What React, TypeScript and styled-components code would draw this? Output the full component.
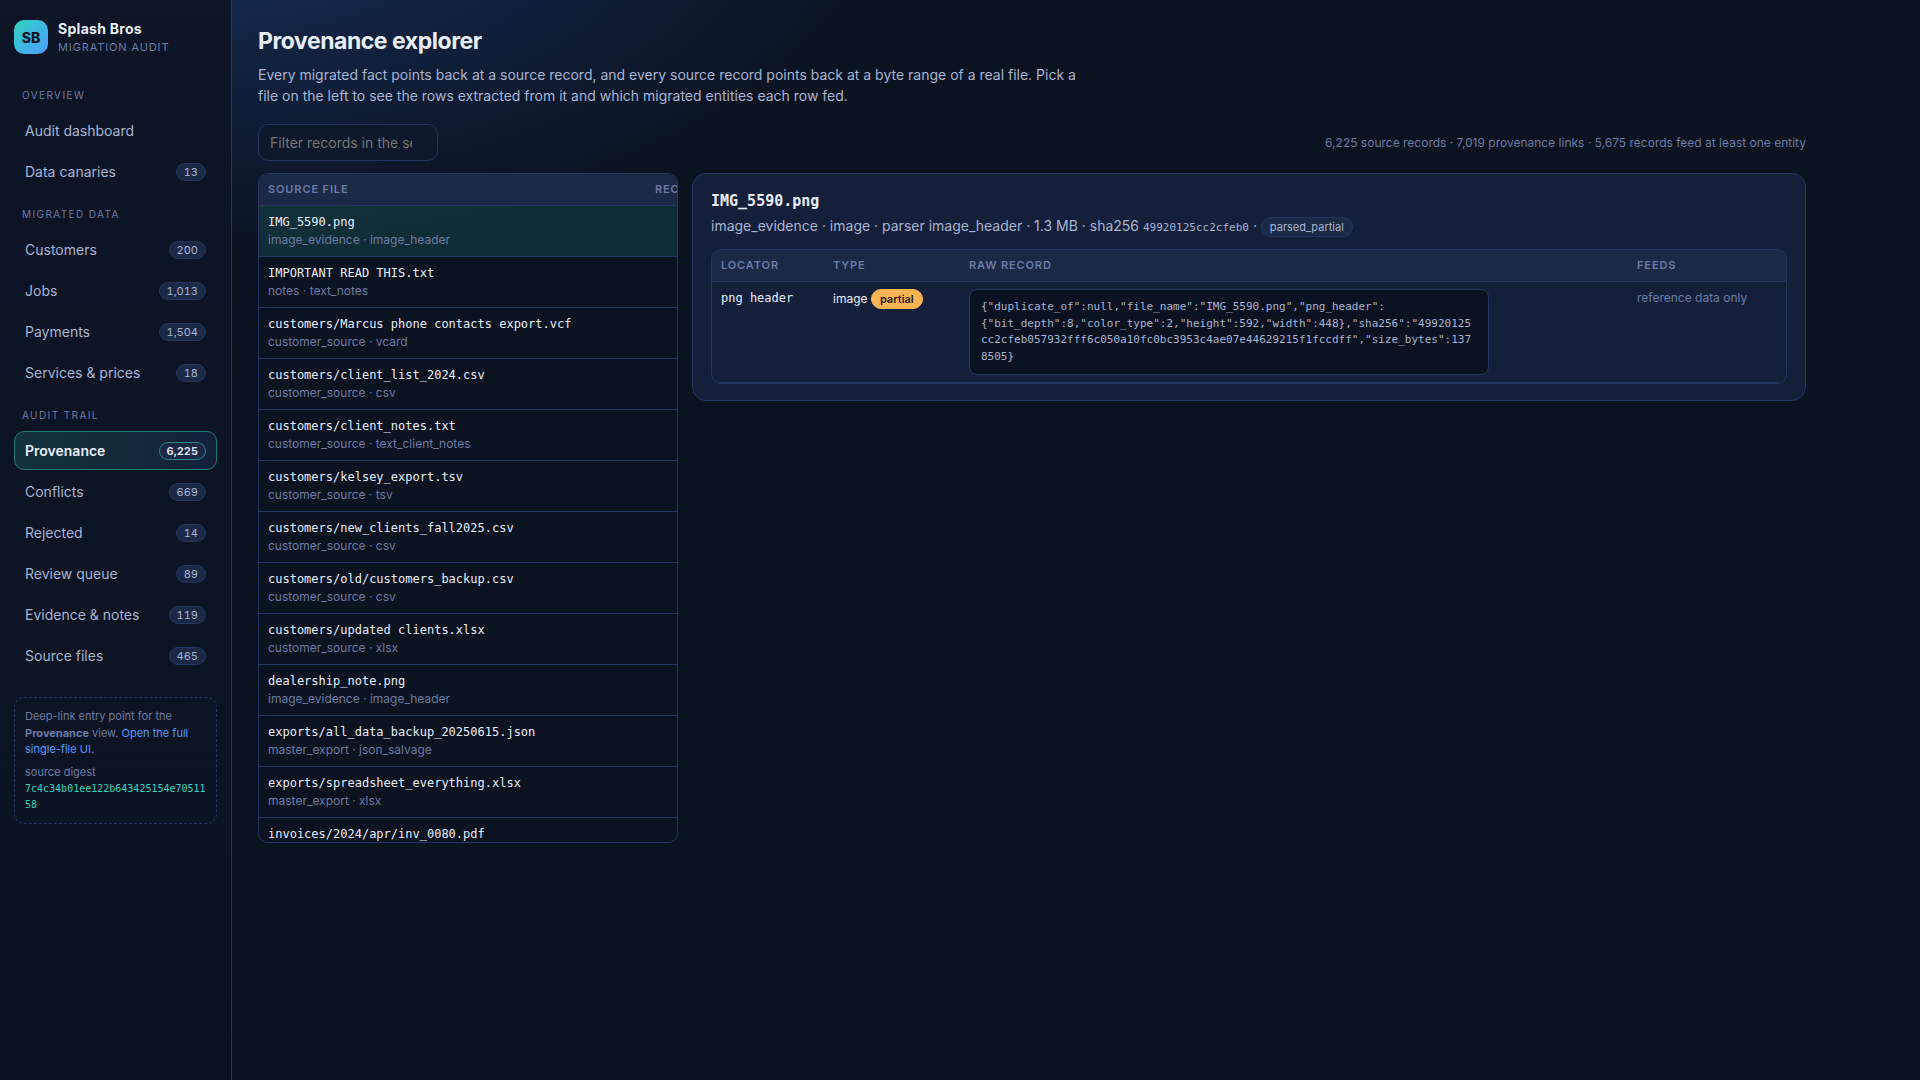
import React from "react";
import styled, { createGlobalStyle, css } from "styled-components";

const c = {
  bg: "#0b1220",
  panel: "#141f3a",
  raised: "#1b2947",
  line: "#233560",
  text: "#e8eefc",
  soft: "#a7b4d3",
  muted: "#6b7ba5",
  teal: "#2dd4bf",
  blue: "#4f9cff",
  amber: "#ffb454",
};

const sans = `Inter, "Noto Sans", sans-serif`;
const mono = `"DejaVu Sans Mono", "Liberation Mono", monospace`;

const GlobalStyle = createGlobalStyle`
  *, *::before, *::after { box-sizing: border-box; }
  body {
    margin: 0;
    background: radial-gradient(1200px 600px at 10% -10%, #16305a 0%, transparent 60%) no-repeat ${c.bg};
    color: ${c.text};
    font: 14px/1.5 ${sans};
    min-height: 100vh;
  }
`;

const Shell = styled.div`
  display: grid;
  grid-template-columns: 232px minmax(0, 1fr);
  min-height: 100vh;
`;

const Sidebar = styled.aside`
  padding: 20px 14px;
  border-right: 1px solid ${c.line};
  background: linear-gradient(180deg, #0d1426, #0b1220);
`;

const Brand = styled.div`
  display: flex;
  align-items: flex-start;
  gap: 10px;
  margin-bottom: 16px;
`;

const Logo = styled.div`
  display: grid;
  place-items: center;
  width: 34px;
  height: 34px;
  border-radius: 10px;
  background: linear-gradient(135deg, ${c.teal}, ${c.blue});
  color: #06121f;
  font-weight: 800;
`;

const BrandName = styled.div`
  font-weight: 700;
  line-height: 18px;
  letter-spacing: 0.02em;
`;

const BrandSub = styled.div`
  color: ${c.muted};
  font-size: 11px;
  line-height: 18px;
  letter-spacing: 0.08em;
  text-transform: uppercase;
`;

const NavGroup = styled.div`
  display: flex;
  flex-direction: column;
  gap: 2px;
`;

const NavLabel = styled.div`
  padding: 16px 8px 6px;
  color: ${c.muted};
  font-size: 10px;
  letter-spacing: 0.14em;
  text-transform: uppercase;
`;

const Count = styled.span<{ $active?: boolean }>`
  padding: 0 7px;
  border: 1px solid ${(p) => (p.$active ? "#23857f" : c.line)};
  border-radius: 9px;
  background: ${c.raised};
  color: ${(p) => (p.$active ? c.text : c.soft)};
  font-size: 11px;
  line-height: 16px;
  font-variant-numeric: tabular-nums;
`;

const NavLink = styled.a<{ $active?: boolean }>`
  display: flex;
  align-items: center;
  justify-content: space-between;
  padding: 8px 10px;
  border: 1px solid transparent;
  border-radius: 10px;
  color: ${c.soft};
  text-decoration: none;
  ${(p) =>
    p.$active &&
    css`
      border-color: #1f7a76;
      background: linear-gradient(90deg, rgba(45, 212, 191, 0.16), rgba(79, 156, 255, 0.1));
      color: ${c.text};
      font-weight: 600;
    `}
`;

const Note = styled.div`
  margin-top: 22px;
  padding: 10px;
  border: 1px dashed ${c.line};
  border-radius: 10px;
  color: ${c.muted};
  font-size: 11px;

  a {
    color: ${c.blue};
    text-decoration: none;
  }
`;

const Digest = styled.div`
  margin-top: 6px;

  code {
    display: block;
    margin-top: 1px;
    color: ${c.teal};
    font-family: ${mono};
    font-size: 10px;
    line-height: 16px;
    word-break: break-all;
  }
`;

const Main = styled.main`
  max-width: 1600px;
  padding: 24px 26px;
`;

const Title = styled.h1`
  margin: 0 0 6px;
  font-size: 23px;
  line-height: 34px;
  letter-spacing: -0.02em;
`;

const Lead = styled.p`
  max-width: 820px;
  margin: 0 0 18px;
  color: ${c.soft};
`;

const Toolbar = styled.div`
  display: flex;
  align-items: center;
  justify-content: space-between;
  margin-bottom: 12px;
`;

const Search = styled.input`
  width: 180px;
  padding: 9px 11px;
  border: 1px solid ${c.line};
  border-radius: 10px;
  background: #0d182b;
  color: ${c.text};
  font: 14px/17px ${sans};
`;

const Stats = styled.span`
  color: ${c.muted};
  font-size: 12px;
`;

const Columns = styled.div`
  display: grid;
  grid-template-columns: 420px minmax(0, 1fr);
  gap: 14px;
  align-items: start;
`;

const TableFrame = styled.div<{ $tall?: boolean }>`
  overflow: hidden;
  border: 1px solid ${c.line};
  border-radius: 10px;
  ${(p) => p.$tall && "height: 62vh;"}
`;

const Table = styled.table<{ $min?: number }>`
  width: 100%;
  min-width: ${(p) => (p.$min ? `${p.$min}px` : "0")};
  border-collapse: separate;
  border-spacing: 0;
  table-layout: fixed;
  font-size: 12px;
`;

const Th = styled.th<{ $w?: number }>`
  width: ${(p) => (p.$w ? `${p.$w}px` : "auto")};
  padding: 8px 9px;
  border-bottom: 1px solid ${c.line};
  background: ${c.raised};
  color: ${c.muted};
  font-size: 11px;
  font-weight: 600;
  line-height: 15px;
  letter-spacing: 0.08em;
  text-align: left;
  text-transform: uppercase;
`;

const Td = styled.td`
  padding: 7px 9px;
  border-bottom: 1px solid ${c.line};
  vertical-align: top;
`;

const FileRow = styled.tr<{ $active?: boolean }>`
  background: ${(p) => (p.$active ? "rgba(45, 212, 191, 0.14)" : "transparent")};
`;

const FileName = styled.div`
  font-family: ${mono};
  line-height: 18px;
  white-space: nowrap;
`;

const Dim = styled.div`
  color: ${c.muted};
  line-height: 18px;
`;

const Card = styled.section`
  padding: 16px 18px;
  border: 1px solid ${c.line};
  border-radius: 14px;
  background: ${c.panel};
`;

const CardTitle = styled.h2`
  margin: 0 0 3px;
  font: 700 15px/22px ${mono};
`;

const CardMeta = styled.p`
  margin: 0 0 12px;
  color: ${c.soft};

  code {
    font-family: ${mono};
    font-size: 11px;
  }
`;

const Pill = styled.span<{ $warn?: boolean }>`
  display: inline-block;
  padding: 1px 8px;
  border: 1px solid ${(p) => (p.$warn ? c.amber : c.line)};
  border-radius: 10px;
  background: ${(p) => (p.$warn ? c.amber : c.raised)};
  color: ${(p) => (p.$warn ? "#231603" : c.soft)};
  font-size: 11px;
  font-weight: ${(p) => (p.$warn ? 600 : 400)};
  line-height: 16px;
`;

const Raw = styled.pre`
  max-width: 520px;
  margin: 0;
  padding: 9px 11px;
  border: 1px solid ${c.line};
  border-radius: 8px;
  background: #0a1120;
  color: ${c.soft};
  font: 11px/1.5 ${mono};
  white-space: pre-wrap;
  overflow-wrap: anywhere;
`;

type Item = { label: string; count?: string; active?: boolean };

const nav: { title: string; items: Item[] }[] = [
  { title: "Overview", items: [{ label: "Audit dashboard" }, { label: "Data canaries", count: "13" }] },
  {
    title: "Migrated data",
    items: [
      { label: "Customers", count: "200" },
      { label: "Jobs", count: "1,013" },
      { label: "Payments", count: "1,504" },
      { label: "Services & prices", count: "18" },
    ],
  },
  {
    title: "Audit trail",
    items: [
      { label: "Provenance", count: "6,225", active: true },
      { label: "Conflicts", count: "669" },
      { label: "Rejected", count: "14" },
      { label: "Review queue", count: "89" },
      { label: "Evidence & notes", count: "119" },
      { label: "Source files", count: "465" },
    ],
  },
];

const files: [string, string][] = [
  ["IMG_5590.png", "image_evidence · image_header"],
  ["IMPORTANT READ THIS.txt", "notes · text_notes"],
  ["customers/Marcus phone contacts export.vcf", "customer_source · vcard"],
  ["customers/client_list_2024.csv", "customer_source · csv"],
  ["customers/client_notes.txt", "customer_source · text_client_notes"],
  ["customers/kelsey_export.tsv", "customer_source · tsv"],
  ["customers/new_clients_fall2025.csv", "customer_source · csv"],
  ["customers/old/customers_backup.csv", "customer_source · csv"],
  ["customers/updated clients.xlsx", "customer_source · xlsx"],
  ["dealership_note.png", "image_evidence · image_header"],
  ["exports/all_data_backup_20250615.json", "master_export · json_salvage"],
  ["exports/spreadsheet_everything.xlsx", "master_export · xlsx"],
  ["invoices/2024/apr/inv_0080.pdf", ""],
];

const rawRecord =
  '{"duplicate_of":null,"file_name":"IMG_5590.png","png_header":{"bit_depth":8,"color_type":2,"height":592,"width":448},"sha256":"49920125cc2cfeb057932fff6c050a10fc0bc3953c4ae07e44629215f1fccdff","size_bytes":1378505}';

export default function App() {
  return (
    <>
      <GlobalStyle />
      <Shell>
        <Sidebar>
          <Brand>
            <Logo>SB</Logo>
            <div>
              <BrandName>Splash Bros</BrandName>
              <BrandSub>Migration audit</BrandSub>
            </div>
          </Brand>
          <nav>
            {nav.map((group) => (
              <NavGroup key={group.title}>
                <NavLabel>{group.title}</NavLabel>
                {group.items.map((item) => (
                  <NavLink
                    key={item.label}
                    href="#"
                    $active={item.active}
                    aria-current={item.active ? "page" : undefined}
                  >
                    {item.label}
                    {item.count && <Count $active={item.active}>{item.count}</Count>}
                  </NavLink>
                ))}
              </NavGroup>
            ))}
          </nav>
          <Note>
            Deep-link entry point for the <strong>Provenance</strong> view.{" "}
            <a href="#">Open the full single-file UI</a>.
            <Digest>
              source digest
              <code>7c4c34b01ee122b643425154e7051158</code>
            </Digest>
          </Note>
        </Sidebar>

        <Main>
          <Title>Provenance explorer</Title>
          <Lead>
            Every migrated fact points back at a source record, and every source record points back at a byte range of
            a real file. Pick a file on the left to see the rows extracted from it and which migrated entities each
            row fed.
          </Lead>
          <Toolbar>
            <Search type="search" placeholder="Filter records in the selected file" aria-label="Filter records" />
            <Stats>6,225 source records · 7,019 provenance links · 5,675 records feed at least one entity</Stats>
          </Toolbar>

          <Columns>
            <TableFrame $tall>
              <Table $min={480}>
                <thead>
                  <tr>
                    <Th $w={387}>Source file</Th>
                    <Th>Records</Th>
                  </tr>
                </thead>
                <tbody>
                  {files.map(([name, meta], i) => (
                    <FileRow key={name} $active={i === 0}>
                      <Td>
                        <FileName>{name}</FileName>
                        <Dim>{meta}</Dim>
                      </Td>
                      <Td />
                    </FileRow>
                  ))}
                </tbody>
              </Table>
            </TableFrame>

            <Card>
              <CardTitle>IMG_5590.png</CardTitle>
              <CardMeta>
                image_evidence · image · parser image_header · 1.3 MB · sha256 <code>49920125cc2cfeb0</code> ·{" "}
                <Pill>parsed_partial</Pill>
              </CardMeta>
              <TableFrame>
                <Table>
                  <thead>
                    <tr>
                      <Th $w={112}>Locator</Th>
                      <Th $w={136}>Type</Th>
                      <Th>Raw record</Th>
                      <Th $w={158}>Feeds</Th>
                    </tr>
                  </thead>
                  <tbody>
                    <tr>
                      <Td>
                        <FileName>png header</FileName>
                      </Td>
                      <Td>
                        image <Pill $warn>partial</Pill>
                      </Td>
                      <Td>
                        <Raw>{rawRecord}</Raw>
                      </Td>
                      <Td>
                        <Dim>reference data only</Dim>
                      </Td>
                    </tr>
                  </tbody>
                </Table>
              </TableFrame>
            </Card>
          </Columns>
        </Main>
      </Shell>
    </>
  );
}
